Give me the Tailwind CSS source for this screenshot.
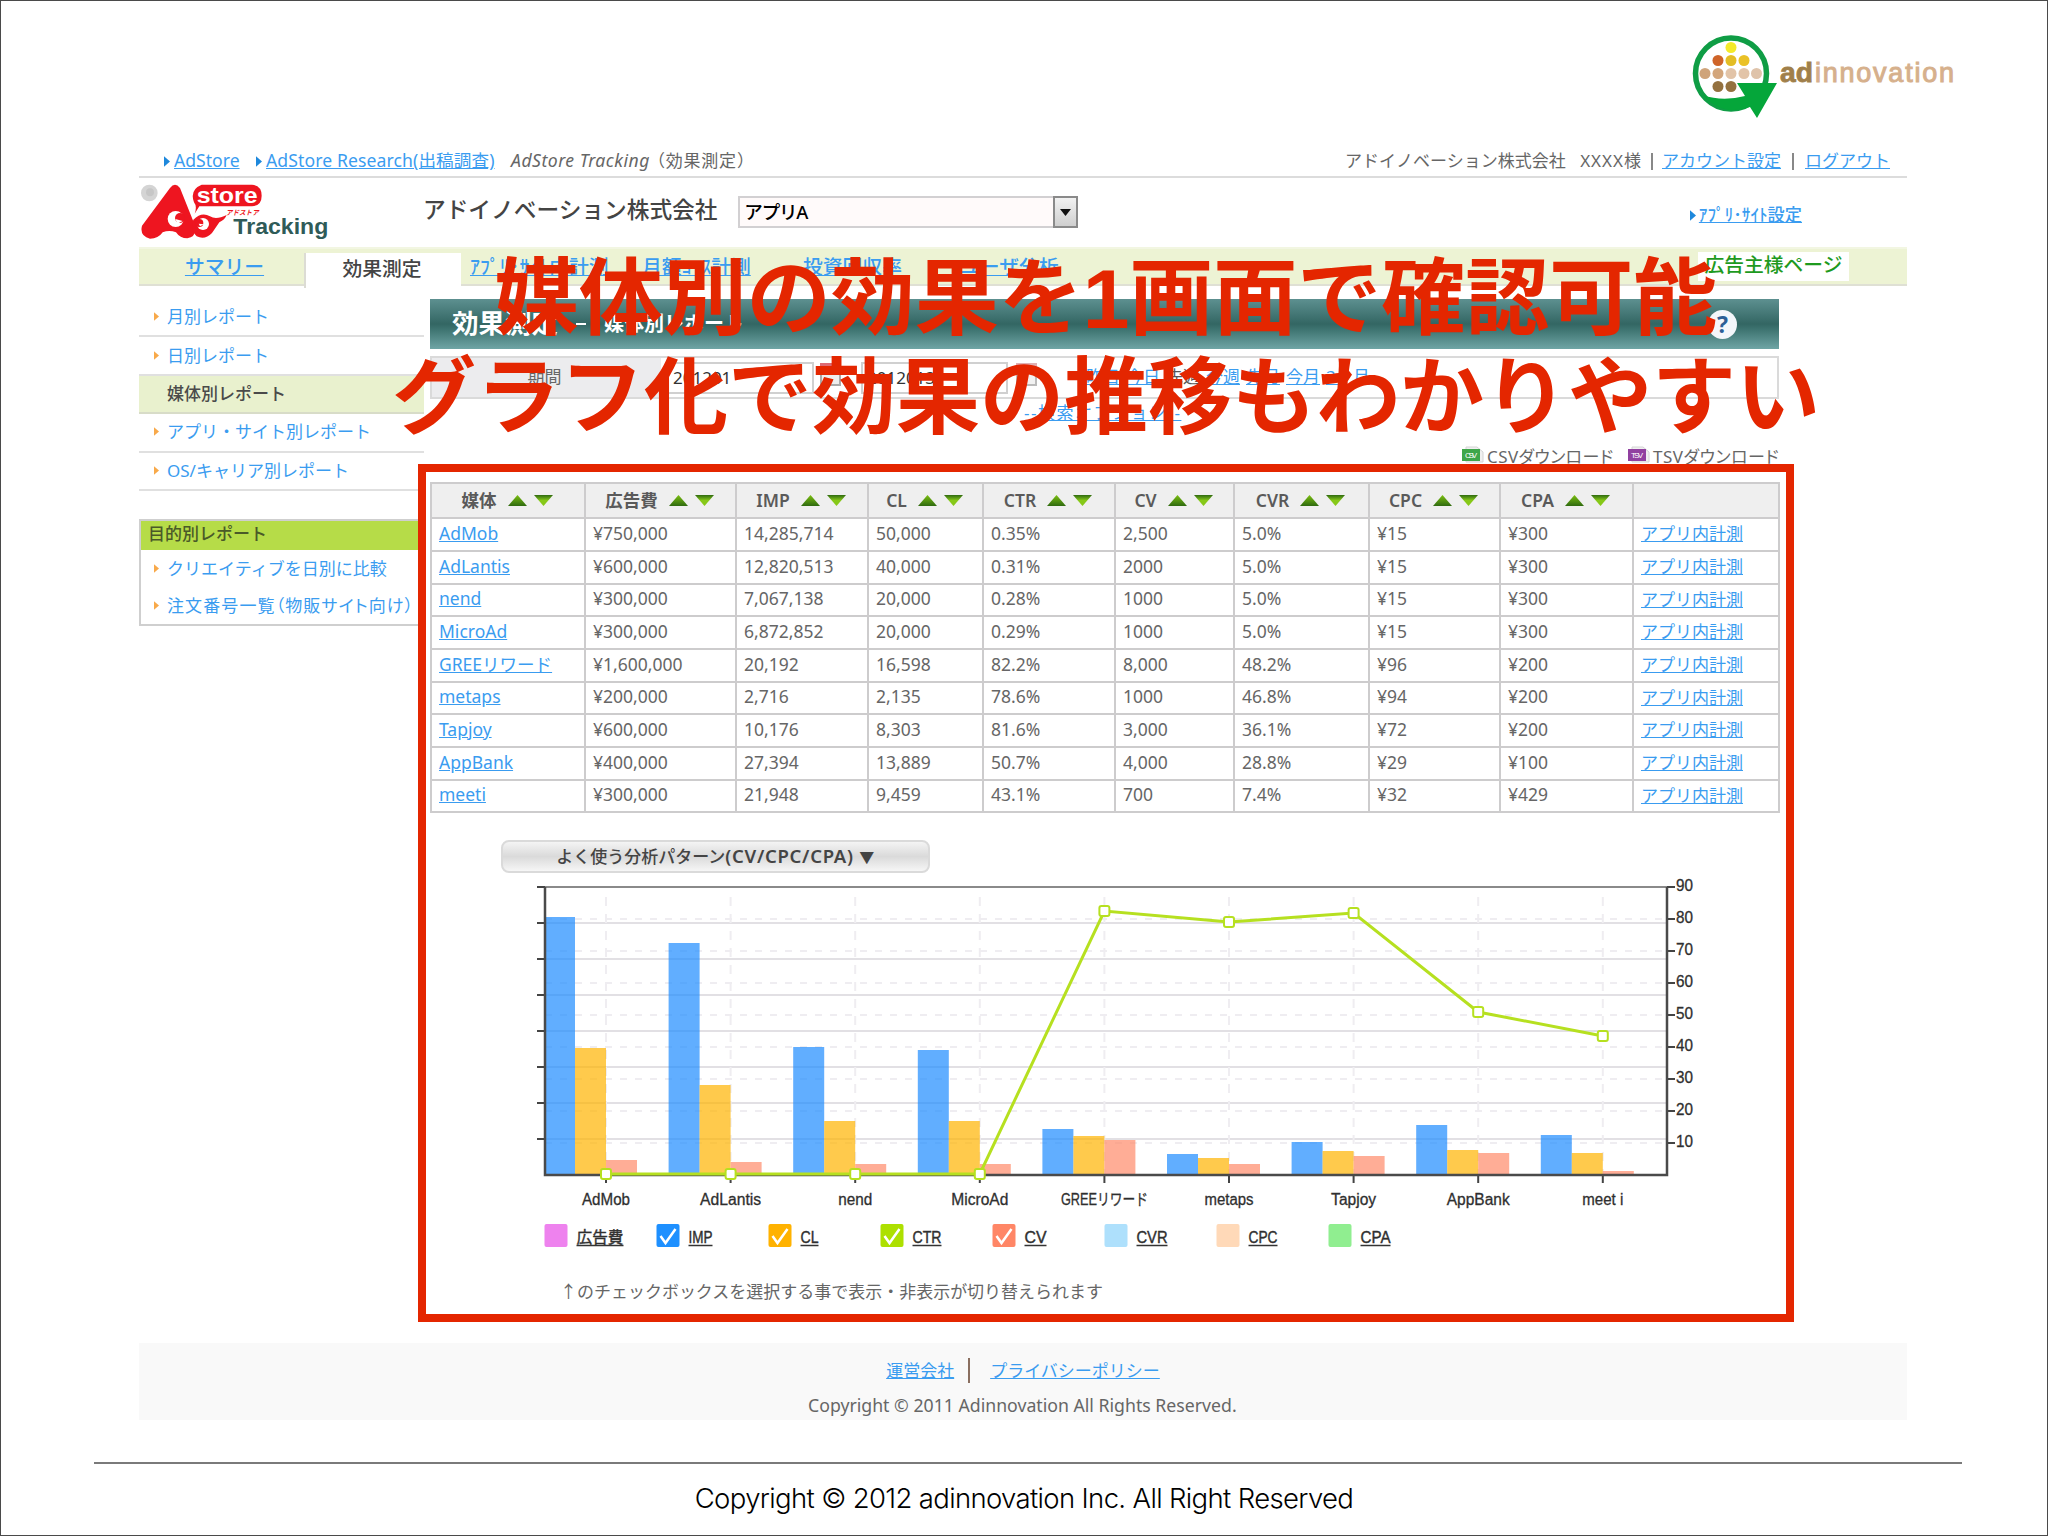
<!DOCTYPE html>
<html lang="ja">

<head>
    <meta charset="UTF-8">
    <meta name="viewport" content="width=device-width, initial-scale=1.0">
    <title>AdStore Tracking</title>
    <script src="https://cdn.jsdelivr.net/npm/@tailwindcss/browser@4"></script>
    <style>
        body {
            font-family: 'Noto Sans', 'Noto Sans CJK JP', sans-serif;
        }
    </style>
</head>

<body class="relative w-[2048px] h-[1536px] overflow-hidden bg-white border border-[#4a4a4a] text-[#666] leading-none whitespace-nowrap">

    <!-- Slide header -->
    <header class="h-[145px] flex justify-end pt-[29px] pr-[83px]">
        <svg class="w-[272px] h-[92px]" viewBox="1692 30 272 92">
            <circle cx="1731" cy="73.500" r="35.5" fill="#fff" stroke="#0f9d45" stroke-width="5.5" />
            <path d="M1703 95 Q1722 102 1745 96 L1737 83 H1777 L1757 118 L1750 107 Q1722 117 1703 95Z" fill="#05a63a" />
            <circle cx="1731" cy="47.500" r="5.500" fill="#f4ea2a" />
            <circle cx="1718" cy="60.500" r="5.500" fill="#cf6428" />
            <circle cx="1731" cy="60.500" r="5.500" fill="#e3bd25" />
            <circle cx="1744" cy="60.500" r="5.500" fill="#eac126" />
            <circle cx="1705" cy="73.500" r="5.500" fill="#cfa47a" />
            <circle cx="1718" cy="73.500" r="5.500" fill="#d3a67c" />
            <circle cx="1731" cy="73.500" r="5.500" fill="#e2c4a8" />
            <circle cx="1744" cy="73.500" r="5.500" fill="#e2c4a8" />
            <circle cx="1756.500" cy="73.500" r="5.500" fill="#dfc3aa" />
            <circle cx="1718" cy="86.500" r="5.500" fill="#94713f" />
            <circle cx="1731" cy="86.500" r="5.500" fill="#94713f" />
            <text x="1780" y="82" font-size="27" font-weight="700" font-family="Liberation Sans" fill="#a07f4a" stroke="#a07f4a" stroke-width=".8" textLength="33" lengthAdjust="spacingAndGlyphs">ad</text>
            <text x="1815" y="82" font-size="27" font-family="Liberation Sans" fill="#d6b08c" stroke="#d6b08c" stroke-width="1" textLength="139">innovation</text>
        </svg>
    </header>

    <div class="ml-[138px] w-[1768px]">
        <!-- Account bar -->
        <div class="h-[32px] border-b-2 border-[#dcdcdc] flex items-center text-[17.6px]">
            <svg class="w-[6px] h-[11px] ml-[25px] mr-[4px]" viewBox="0 0 7 12"><path d="M0 0L7 6L0 12Z" fill="#1e88dc" /></svg>
            <a class="w-[66px] text-[#3a9cf0] underline">AdStore</a>
            <svg class="w-[6px] h-[11px] ml-[16px] mr-[4px]" viewBox="0 0 7 12"><path d="M0 0L7 6L0 12Z" fill="#1e88dc" /></svg>
            <a class="w-[229px] text-[#3a9cf0] underline tracking-[0.1px]">AdStore Research(出稿調査)</a>
            <span class="ml-[16px] italic tracking-[0.5px]">AdStore Tracking<span class="-ml-[2px] not-italic text-[17px] tracking-[0.8px]">（効果測定）</span></span>
            <div class="ml-auto mr-[17px] flex items-center text-[17px]">
                <span class="w-[297px] pb-[1px] flex justify-between"><span>アドイノベーション株式会社</span><span class="tracking-[1px]">XXXX様</span></span>
                <span class="mx-[9px] w-[2px] h-[17px] bg-[#888]"></span>
                <a class="w-[119px] pb-[1px] text-[#3a9cf0] underline">アカウント設定</a>
                <span class="mx-[11px] w-[2px] h-[17px] bg-[#888]"></span>
                <a class="w-[85px] pb-[1px] text-[#3a9cf0] underline">ログアウト</a>
            </div>
        </div>

        <!-- Logo and account selector -->
        <div class="h-[69px] flex">
            <svg class="w-[189px] h-[57px] mt-[5px] ml-[2px]" viewBox="33 40 567 171">
                <circle cx="58" cy="70" r="25" fill="#d4d4d4" />
                <circle cx="60" cy="68" r="12" fill="#c6c6c6" />
                <path d="M120 55 Q135 35 150 55 L192 160 Q205 200 172 206 Q150 206 138 188 Q118 180 98 188 Q85 207 60 207 Q28 200 36 168 Z" fill="#ee1520" />
                <path d="M190 150 Q215 125 240 140 Q258 152 290 136 Q285 150 268 158 L246 190 Q225 212 200 200 Q180 180 190 150Z" fill="#ee1520" />
                <path d="M215 45 H366 Q395 48 395 78 Q395 108 366 110 H208 L194 132 Q202 110 192 98 Q178 60 215 45Z" fill="#ee1520" />
                <circle cx="137" cy="148" r="24" fill="#fff" />
                <circle cx="150" cy="145" r="15" fill="#ee1520" />
                <path d="M136 148 L158 154 L142 162Z" fill="#fff" />
                <circle cx="219" cy="163" r="18" fill="#fff" />
                <circle cx="208" cy="160" r="12" fill="#ee1520" />
                <path d="M206 162 L222 164 L210 170Z" fill="#fff" />
                <text x="200" y="99" font-size="66" font-weight="700" font-family="Liberation Sans" fill="#fff" textLength="183" lengthAdjust="spacingAndGlyphs">store</text>
                <text x="288" y="136" font-size="20" font-weight="700" font-style="italic" font-family="Noto Sans CJK JP" fill="#ee1520" textLength="98" lengthAdjust="spacingAndGlyphs">アドストア</text>
                <text x="310" y="192" font-size="66" font-weight="700" font-family="Liberation Sans" fill="#2f5b58" textLength="285" lengthAdjust="spacingAndGlyphs">Tracking</text>
            </svg>
            <h1 class="ml-[93px] mt-[21px] w-[301px] text-[22.7px] font-medium text-[#444]">アドイノベーション株式会社</h1>
            <div class="ml-[14px] mt-[18px] w-[340px] h-[32px] border-2 border-[#d2d0d2] bg-[#fffafa] flex items-center">
                <span class="pl-[5px] text-[18.5px] font-medium text-black [font-feature-settings:'palt'] tracking-[0.6px]">アプリA</span>
                <div class="ml-auto -mr-[2px] w-[25px] h-[32px] border-2 border-[#8a8a8a] bg-gradient-to-b from-[#f2f2f2] to-[#cfcfcf] flex items-center justify-center">
                    <svg class="w-[11px] h-[7px]" viewBox="0 0 11 7"><path d="M0 0H11L5.500 7Z" fill="#111" /></svg>
                </div>
            </div>
            <div class="ml-auto mr-[105px] mt-[27px] flex h-[20px] items-center text-[17.2px] font-medium text-[#3a9cf0]">
                <svg class="w-[6px] h-[11px] mr-[3px]" viewBox="0 0 7 12"><path d="M0 0L7 6L0 12Z" fill="#1e88dc" /></svg>
                <a class="underline">ｱﾌﾟﾘ･ｻｲﾄ設定</a>
            </div>
        </div>

        <!-- Tabs -->
        <nav class="h-[39px] bg-[#edf3d4] border-y-2 border-b-[#dfe0d4] border-t-[#f2f6e2] flex text-[19.8px] font-medium text-[#3a9cf0]">
            <a class="w-[165px] pl-[6px] leading-[36px] text-center underline">サマリー</a>
            <span class="w-[157px] mt-[4px] h-[35px] leading-[31px] bg-white border-l-2 border-[#dcdcd4] pr-[3px] text-center text-[#444]">効果測定</span>
            <a class="ml-[9px] w-[138px] leading-[35px] underline">ｱﾌﾟﾘ･ｻｲﾄ内計測</a>
            <a class="ml-[34px] w-[109px] leading-[35px] underline">月額ｺｰｽ計測</a>
            <a class="ml-[52px] w-[100px] leading-[35px] underline">投資回収率</a>
            <a class="ml-[57px] w-[100px] leading-[35px] underline">ユーザ分析</a>
            <span class="ml-auto mr-[58px] mt-[3px] w-[151px] h-[29px] leading-[26px] bg-white text-center text-[#1e9a1e]">広告主様ページ</span>
        </nav>

        <div class="h-[1057px] flex">
            <!-- Side menu -->
            <aside class="w-[285px] pt-[13px] text-[17px] text-[#3a9cf0]">
                <ul id="reportMenu"></ul>
                <div class="mt-[28px] border-2 border-[#cfcfcf]">
                    <h2 class="h-[29px] leading-[26px] pl-[7px] bg-[#b6dc48] font-medium text-[#4a5a28]">目的別レポート</h2>
                    <ul id="purposeMenu" class="h-[74px]"></ul>
                </div>
            </aside>

            <main class="ml-[6px] w-[1349px] pt-[13px]">
                <div class="h-[50px] bg-[linear-gradient(#5d9090,#336663_50%,#3f7572_62%,#6fa5a5)] flex items-center text-white font-bold">
                    <span class="ml-[22px] pb-[1px] text-[26.5px]">効果測定</span>
                    <span class="ml-[18px] w-[10px] h-[2px] bg-white"></span>
                    <span class="ml-[18px] text-[20px]">媒体別レポート</span>
                    <span class="ml-auto mr-[42px] w-[29px] h-[29px] rounded-full bg-[#f4f6fa] leading-[28px] text-center text-[23px] font-bold text-[#2d5f96]">?</span>
                </div>

                <div class="mt-[7px] h-[43px] border-2 border-[#dadada] flex text-[17px]">
                    <div class="w-[229px] bg-[#ececee] leading-[38px] pr-[4px] text-center">期間</div>
                    <div class="ml-[6px] mt-[4px] w-[147px] h-[32px] border-2 border-[#d0d0d0] pl-[4px] leading-[27px] text-[17px] text-[#333]">201201</div>
                    <svg class="ml-[6px] mt-[5px] w-[22px] h-[24px]" viewBox="0 0 22 24"><rect x="1" y="2" width="19" height="20" fill="#eee" stroke="#aaa" stroke-width="2" /><rect x="0" y="0" width="21" height="6" fill="#dd6a74" /></svg>
                    <div class="ml-[19px] mt-[4px] w-[147px] h-[32px] border-2 border-[#d0d0d0] pl-[4px] leading-[27px] text-[17px] text-[#333]">20120131</div>
                    <svg class="ml-[8px] mt-[5px] w-[22px] h-[24px]" viewBox="0 0 22 24"><rect x="1" y="2" width="19" height="20" fill="#f2f2f2" stroke="#bbb" stroke-width="2" /><rect x="0" y="0" width="21" height="4" fill="#dfb0b4" /></svg>
                    <div class="ml-[48px] flex gap-[6px] leading-[38px] text-[#3a9cf0]">
                        <a class="underline">昨日</a><a class="underline">今日</a><span class="text-[#555]">先週</span><a class="underline">今週</a><a class="underline">先月</a><a class="underline">今月</a><a class="underline">3ヶ月</a>
                    </div>
                </div>
                <a class="block ml-[594px] mt-[4px] h-[20px] leading-[20px] text-[17px] tracking-[1.5px] text-[#3a9cf0] underline">--検索オプション--</a>

                <div class="mt-[23px] h-[20px] flex justify-end items-center text-[17px]">
                    <svg class="w-[22px] h-[20px] mr-[3px]" viewBox="0 0 22 20"><path d="M4 1H15L21 6V16H4Z" fill="#f0f0f0" stroke="#d4d4d4" /><rect x="0" y="3" width="18" height="12" fill="#3fa64a" /><text x="3" y="12" font-size="8" font-family="Liberation Sans" fill="#fff" textLength="12">CSV</text></svg>
                    <span class="w-[129px] [font-feature-settings:'palt'] tracking-[0.4px]">CSVダウンロード</span>
                    <svg class="w-[22px] h-[20px] ml-[12px] mr-[3px]" viewBox="0 0 22 20"><path d="M4 1H15L21 6V16H4Z" fill="#f0f0f0" stroke="#d4d4d4" /><rect x="0" y="3" width="18" height="12" fill="#9140a0" /><text x="3" y="12" font-size="8" font-family="Liberation Sans" fill="#fff" textLength="12">TSV</text></svg>
                    <span class="w-[126px] [font-feature-settings:'palt'] tracking-[0.5px]">TSVダウンロード</span>
                </div>

                <!-- Media report -->
                <table class="mt-[16px] w-[1350px] table-fixed border-collapse text-[17.5px]">
                    <colgroup>
                        <col class="w-[154px]"><col class="w-[151px]"><col class="w-[132px]"><col class="w-[115px]"><col class="w-[132px]"><col class="w-[119px]"><col class="w-[135px]"><col class="w-[131px]"><col class="w-[133px]"><col class="w-[146px]">
                    </colgroup>
                    <thead>
                        <tr id="reportHead" class="h-[35px] bg-[#efefef]"></tr>
                    </thead>
                    <tbody id="reportBody"></tbody>
                </table>

                <button class="mt-[27px] ml-[71px] block w-[429px] h-[33px] rounded-[8px] border-2 border-[#dadada] bg-[linear-gradient(#f4f4f4,#dadada_50%,#f6f6f6)] text-[17px] font-medium text-[#444]">よく使う分析パターン<span class="text-[18.5px] tracking-[0.7px] font-semibold">(CV/CPC/CPA) <span class="text-[15px]">▼</span></span></button>

                <svg id="chart" class="mt-[1px] ml-[90px] w-[1200px] h-[440px]" viewBox="520 875 1200 440"></svg>
            </main>
        </div>

        <footer class="h-[77px] bg-[#f9f9f9] flex flex-col items-center text-[17.7px]">
            <div class="mt-[14px] h-[26px] flex items-center text-[17px] text-[#3a9cf0]">
                <a class="underline">運営会社</a>
                <span class="ml-[14px] mr-[20px] w-[2px] h-[25px] bg-[#8a6f60]"></span>
                <a class="underline">プライバシーポリシー</a>
            </div>
            <p class="mt-[14px] w-[430px]">Copyright © 2011 Adinnovation All Rights Reserved.</p>
        </footer>
    </div>

    <div class="mt-[42px] ml-[93px] w-[1868px] h-[2px] bg-[#7a7a7a]"></div>
    <p class="mt-[21px] text-center font-['Inter'] font-light text-[27.5px] tracking-[-0.65px] text-black">Copyright © 2012 adinnovation Inc. All Right Reserved</p>

    <!-- Callout over the report -->
    <div class="absolute left-[417px] top-[463px] w-[1376px] h-[858px] border-[8px] border-[#e42600]"></div>
    <div class="absolute left-[105px] top-[249px] w-[2000px] text-center text-[84px] leading-[99px] font-bold text-[#e42600] font-['Liberation_Sans','Noto_Sans_CJK_JP',sans-serif]">
        媒体別の効果を1画面で確認可能<br>グラフ化で効果の推移もわかりやすい
    </div>

    <script>
        const bullet = '<svg class="w-[5px] h-[11px] mr-[8px]" viewBox="0 0 6 12"><path d="M0 1L6 6L0 11Z" fill="#f8a94a" /></svg>';

        // Side menus
        const reports = ['月別レポート', '日別レポート', '媒体別レポート', 'アプリ・サイト別レポート', 'OS/キャリア別レポート'];
        document.getElementById('reportMenu').innerHTML = reports.map((name, i) => i === 2
            ? `<li class="h-[38.4px] pl-[28px] pb-[1px] flex items-center bg-[#e9f1ce] border-b-2 border-[#d8dcc8] font-medium text-[#4a4a4a]">${name}</li>`
            : `<li class="h-[38.4px] pl-[15px] pb-[1px] flex items-center border-b-2 border-[#e0e0e0]">${bullet}${name}</li>`).join('');
        document.getElementById('purposeMenu').innerHTML =
            `<li class="h-[37px] pl-[13px] flex items-center">${bullet}クリエイティブを日別に比較</li>`
            + `<li class="h-[37px] pl-[13px] flex items-center [font-feature-settings:'palt'] tracking-[1.1px]">${bullet}注文番号一覧（物販サイト向け）</li>`;

        // Report table
        const columns = ['媒体', '広告費', 'IMP', 'CL', 'CTR', 'CV', 'CVR', 'CPC', 'CPA'];
        const rows = [
            ['AdMob', '¥750,000', '14,285,714', '50,000', '0.35%', '2,500', '5.0%', '¥15', '¥300'],
            ['AdLantis', '¥600,000', '12,820,513', '40,000', '0.31%', '2000', '5.0%', '¥15', '¥300'],
            ['nend', '¥300,000', '7,067,138', '20,000', '0.28%', '1000', '5.0%', '¥15', '¥300'],
            ['MicroAd', '¥300,000', '6,872,852', '20,000', '0.29%', '1000', '5.0%', '¥15', '¥300'],
            ['GREEリワード', '¥1,600,000', '20,192', '16,598', '82.2%', '8,000', '48.2%', '¥96', '¥200'],
            ['metaps', '¥200,000', '2,716', '2,135', '78.6%', '1000', '46.8%', '¥94', '¥200'],
            ['Tapjoy', '¥600,000', '10,176', '8,303', '81.6%', '3,000', '36.1%', '¥72', '¥200'],
            ['AppBank', '¥400,000', '27,394', '13,889', '50.7%', '4,000', '28.8%', '¥29', '¥100'],
            ['meeti', '¥300,000', '21,948', '9,459', '43.1%', '700', '7.4%', '¥32', '¥429']
        ];
        const sortIcons = '<svg class="w-[45px] h-[11px]" viewBox="0 0 45 11"><defs><linearGradient id="up" x2="0" y2="1"><stop stop-color="#7cc010" /><stop offset="1" stop-color="#2f6a10" /></linearGradient><linearGradient id="down" x2="0" y2="1"><stop stop-color="#2f6a10" /><stop offset=".5" stop-color="#86c818" /></linearGradient></defs><path d="M0 11L9.500 0L19 11Z" fill="url(#up)" /><path d="M26 0H45L35.500 11Z" fill="url(#down)" /></svg>';
        document.getElementById('reportHead').innerHTML = columns.map(name =>
            `<th class="border-2 border-[#cdcccd] p-0 pr-[2px] font-semibold text-[#5a5a5a]"><span class="flex items-center justify-center gap-[11px]">${name}${sortIcons}</span></th>`).join('')
            + '<th class="border-2 border-[#cdcccd] p-0"></th>';
        document.getElementById('reportBody').innerHTML = rows.map(row =>
            '<tr class="h-[33px] nth-[3n]:h-[32px]">' + row.map((value, i) => i === 0
                ? `<td class="border-2 border-[#cdcccd] p-0 pb-[2px] pl-[7px] text-[#3a9cf0] underline">${value}</td>`
                : `<td class="border-2 border-[#cdcccd] p-0 pb-[2px] pl-[7px]">${value}</td>`).join('')
            + '<td class="border-2 border-[#cdcccd] p-0 pb-[2px] pl-[7px] text-[17px] text-[#3a9cf0] underline">アプリ内計測</td></tr>').join('');

        // Chart: bars for IMP / CL / CV, line for CTR
        const plotLeft = 545, plotRight = 1667, plotTop = 888, plotBottom = 1176;
        const names = [['AdMob', 48], ['AdLantis', 61], ['nend', 34], ['MicroAd', 57], ['GREEリワード', 87], ['metaps', 49], ['Tapjoy', 45], ['AppBank', 63], ['meet i', 41]];
        const imp = [918, 944, 1048, 1051, 1130, 1155, 1143, 1126, 1136];
        const cl = [1049, 1086, 1122, 1122, 1137, 1159, 1152, 1151, 1154];
        const cv = [1161, 1163, 1165, 1165, 1141, 1165, 1157, 1154, 1172];
        const ctr = [1175, 1175, 1175, 1175, 912, 923, 914, 1013, 1037];
        const centerOf = i => 606 + i * 124.6;
        let svg = '';

        for (let i = 1; i < 8; i++) {
            const y = plotTop + i * 36;
            svg += `<path d="M${plotLeft} ${y}H${plotRight}" stroke="#e2e0e4" stroke-width="2" /><path d="M${plotLeft - 8} ${y}H${plotLeft}" stroke="#444" stroke-width="2" />`;
        }
        for (let i = 1; i <= 9; i++) {
            const y = plotBottom - i * 32;
            if (i < 9) svg += `<path d="M${plotLeft} ${y}H${plotRight}" stroke="#efedf1" stroke-width="2" stroke-dasharray="7 8" />`;
            svg += `<path d="M${plotRight} ${y}H${plotRight + 8}" stroke="#444" stroke-width="2" /><text x="${plotRight + 9}" y="${y + 4}" font-size="16.500" stroke="#2f2f2f" stroke-width=".3" textLength="17" lengthAdjust="spacingAndGlyphs">${i * 10}</text>`;
        }
        names.forEach(([name, width], i) => {
            const x = centerOf(i);
            svg += `<path d="M${x} 898V${plotBottom}" stroke="#efedf1" stroke-width="2" stroke-dasharray="9 8" />`;
            svg += `<rect x="${x - 62}" y="${imp[i]}" width="31" height="${plotBottom - imp[i]}" fill="#1e8cff" fill-opacity=".7" />`;
            svg += `<rect x="${x - 31}" y="${cl[i]}" width="31" height="${plotBottom - cl[i]}" fill="#ffb400" fill-opacity=".7" />`;
            svg += `<rect x="${x}" y="${cv[i]}" width="31" height="${plotBottom - cv[i]}" fill="#ff8a6a" fill-opacity=".7" />`;
            svg += `<path d="M${x} ${plotBottom}V1184" stroke="#444" stroke-width="2" />`;
            svg += `<text x="${x - width / 2}" y="1206" font-size="16" stroke="#2f2f2f" stroke-width=".3" textLength="${width}" lengthAdjust="spacingAndGlyphs">${name}</text>`;
        });
        svg += `<path d="M537 ${plotTop}H${plotLeft}" stroke="#444" stroke-width="2" /><path d="M${plotLeft} ${plotTop}H${plotRight}" stroke="#8a8a8a" stroke-width="2" />`;
        svg += `<path d="M${plotLeft} ${plotTop}V${plotBottom}H${plotRight}V${plotTop}" fill="none" stroke="#4a4a4a" stroke-width="2.500" />`;
        svg += `<polyline points="${ctr.map((y, i) => centerOf(i) + ',' + y).join(' ')}" fill="none" stroke="#b6e020" stroke-width="3" />`;
        svg += ctr.map((y, i) => `<rect x="${centerOf(i) - 5}" y="${y - 5}" width="10" height="10" rx="2" fill="#fff" stroke="#b6e020" stroke-width="2" />`).join('');

        // Legend with its check boxes
        const legend = [['広告費', '#ee82ee', false, 47], ['IMP', '#1e90ff', true, 24], ['CL', '#ffb200', true, 18], ['CTR', '#ade000', true, 29], ['CV', '#ff8666', true, 22], ['CVR', '#aee0fc', false, 31], ['CPC', '#ffd9b8', false, 29], ['CPA', '#90ee90', false, 30]];
        legend.forEach(([name, color, checked, width], i) => {
            const x = 544.5 + i * 112;
            svg += `<rect x="${x}" y="1225" width="23" height="23" rx="2" fill="${color}" />`;
            if (checked) svg += `<path d="M${x + 4} 1237L${x + 9} 1244L${x + 19} 1230" fill="none" stroke="#fff" stroke-width="2.500" />`;
            svg += `<text x="${x + 32}" y="1244" font-size="16" stroke="#2f2f2f" stroke-width=".4" textLength="${width}" lengthAdjust="spacingAndGlyphs">${name}</text>`;
            svg += `<path d="M${x + 32} 1246.500H${x + 32 + width}" stroke="#333" stroke-width="1.500" />`;
        });
        svg += '<text x="560" y="1299" font-size="17" fill="#666" font-family="Noto Sans CJK JP" textLength="543" lengthAdjust="spacingAndGlyphs">↑のチェックボックスを選択する事で表示・非表示が切り替えられます</text>';

        const chart = document.getElementById('chart');
        chart.innerHTML = `<g font-family="Liberation Sans, Noto Sans CJK JP, sans-serif" fill="#2f2f2f">${svg}</g>`;
    </script>
</body>

</html>
